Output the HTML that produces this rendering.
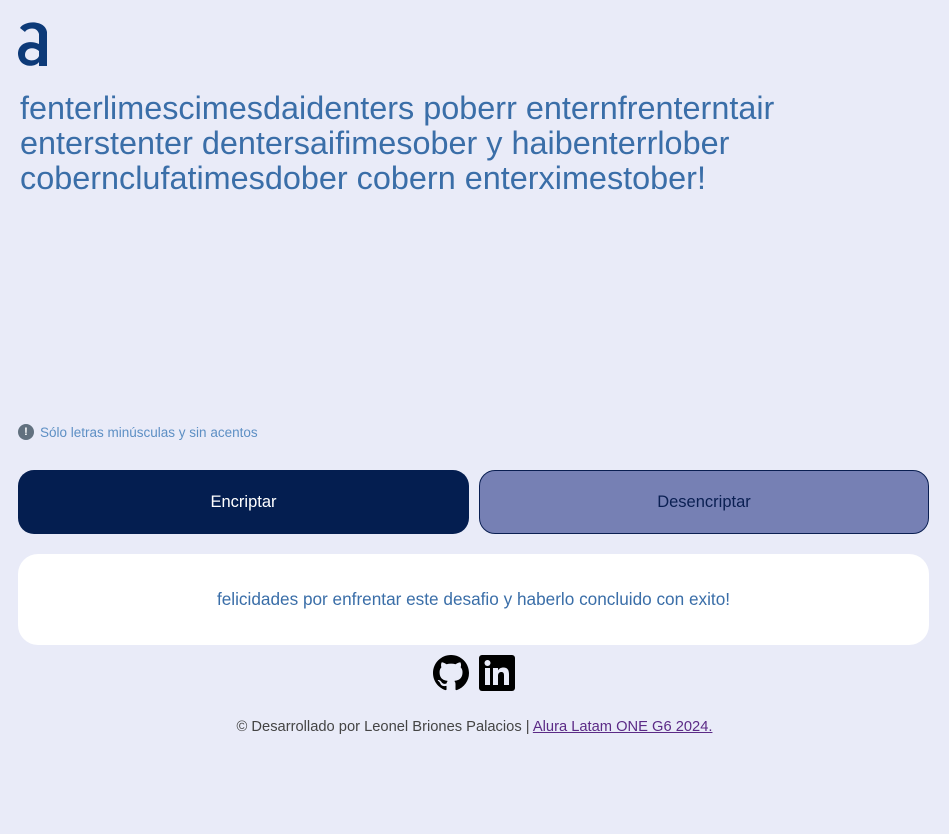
<!DOCTYPE html>
<html><head><meta charset="utf-8"><style>
body{margin:0;background:#e9ebf8;font-family:"Liberation Sans",sans-serif;width:949px;height:834px;position:relative;overflow:hidden}
.logo{position:absolute;left:17px;top:18px}
h1{position:absolute;left:20px;top:91px;margin:0;font-weight:400;font-size:32.4px;line-height:35px;color:#3a6ea8;white-space:nowrap}
.warn{position:absolute;left:18px;top:424px;font-size:13.5px;color:#5d8fc4;display:flex;align-items:center}
.warn span.i{width:16px;height:16px;border-radius:50%;background:#62717f;color:#fff;font-size:11px;font-weight:bold;display:inline-flex;align-items:center;justify-content:center;margin-right:6px}
.btn{position:absolute;top:470px;height:64px;border-radius:16px;display:flex;align-items:center;justify-content:center;font-size:16.5px;box-sizing:border-box}
.b1{left:18px;width:451px;background:#041e50;color:#fff}
.b2{left:479px;width:450px;background:#7680b4;color:#0a1f52;border:1px solid #0a1f52}
.res{position:absolute;left:18px;top:554px;width:911px;height:91px;background:#fff;border-radius:20px;display:flex;align-items:center;justify-content:center;font-size:17.2px;color:#3a6ea8}
.icons{position:absolute;left:433px;top:655px;display:flex;gap:10px}
.foot{position:absolute;left:0;width:949px;top:719px;text-align:center;font-size:14.7px;color:#444}
.foot a{color:#5b2a86;text-decoration:underline}
</style></head><body>
<svg class="logo" width="34" height="50" viewBox="0 0 34 50"><path d="M3 10 C8 2 28 2 30 14 L30 48 L22 48 L22 44 C18 50 2 50 1 36 C1 24 14 22 22 26 L22 16 C20 8 10 10 8 14 Z M22 33 C16 28 8 30 8 37 C8 44 20 44 22 38 Z" fill="#0d3a78" fill-rule="evenodd"/></svg>
<h1>fenterlimescimesdaidenters poberr enternfrenterntair<br>enterstenter dentersaifimesober y haibenterrlober<br>cobernclufatimesdober cobern enterximestober!</h1>
<div class="warn"><span class="i">!</span>Sólo letras minúsculas y sin acentos</div>
<div class="btn b1">Encriptar</div>
<div class="btn b2">Desencriptar</div>
<div class="res">felicidades por enfrentar este desafio y haberlo concluido con exito!</div>
<div class="icons">
<svg width="36" height="36" viewBox="0 0 16 16"><path fill="#000" d="M8 0C3.58 0 0 3.58 0 8c0 3.54 2.29 6.53 5.47 7.590.4.07.55-.17.55-.38 0-.19-.01-.82-.01-1.49-2.01.37-2.530-.49-2.690-.94-.09-.23-.48-.94-.82-1.13-.28-.15-.68-.52-.01-.53.63-.01 1.08.58 1.23.82.72 1.21 1.87.87 2.33.66.07-.52.28-.87.51-1.07-1.78-.2-3.64-.89-3.64-3.95 0-.87.31-1.59.82-2.15-.08-.2-.36-1.02.08-2.12 0 0 .67-.21 2.2.82.64-.18 1.32-.27 2-.27.68 0 1.36.09 2 .27 1.53-1.04 2.2-.82 2.2-.82.44 1.1.16 1.92.08 2.12.51.56.82 1.27.82 2.15 0 3.07-1.87 3.75-3.65 3.95.29.25.54.73.54 1.48 0 1.07-.01 1.93-.01 2.2 0 .21.15.46.55.38A8.013 8.013 0 0016 8c0-4.42-3.58-8-8-8z"/></svg>
<svg width="36" height="36" viewBox="0 0 36 36"><rect width="36" height="36" rx="3" fill="#000"/><rect x="6" y="13" width="5" height="17" fill="#e9ebf8"/><circle cx="8.5" cy="8" r="3" fill="#e9ebf8"/><path d="M14 13h5v2.5c1-2 3-3 5.5-3 4 0 5.5 2.5 5.5 7V30h-5v-9.5c0-2.5-.8-3.5-2.6-3.5-2 0-3.4 1.3-3.4 4V30h-5z" fill="#e9ebf8"/></svg>
</div>
<div class="foot">© Desarrollado por Leonel Briones Palacios | <a>Alura Latam ONE G6 2024.</a></div>
</body></html>
